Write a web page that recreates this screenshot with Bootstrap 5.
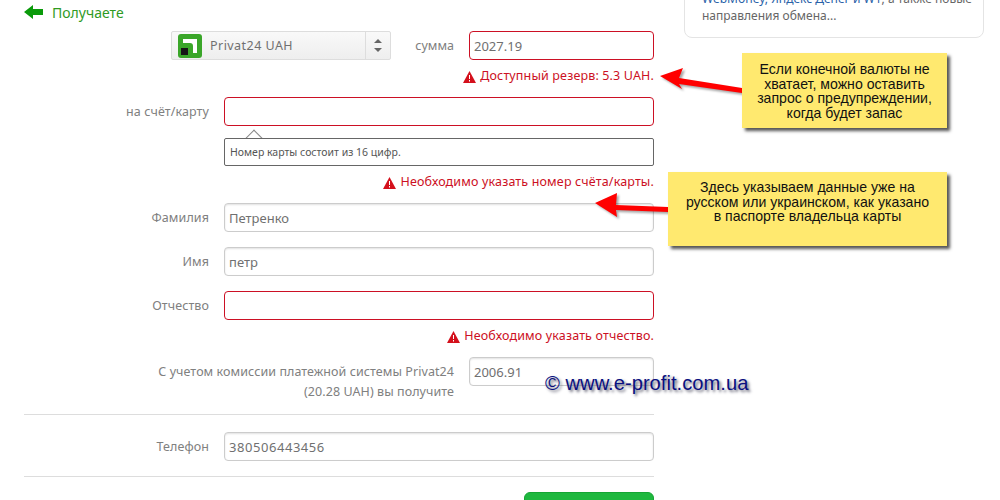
<!DOCTYPE html>
<html lang="ru">
<head>
  <meta charset="UTF-8" />
  <meta name="viewport" content="width=device-width, initial-scale=1.0"/>
  <title>Получаете</title>
  <link href="https://cdn.jsdelivr.net/npm/bootstrap@5.3.0/dist/css/bootstrap.min.css" rel="stylesheet"/>
  <style>
    html, body { height: 500px; overflow: hidden; }
    body { font-family: "Noto Sans", "Open Sans", sans-serif; font-size: 13px; color: #666; background: #fff; position: relative; }
    .page-wrap { padding-left: 24px; gap: 30px; height: 500px; overflow: hidden; }
    .main-col { width: 630px; flex: none; }
    .side-col { width: 300px; flex: none; }

    .heading-line { height: 31px; color: #2f9a1f; font-size: 14px; padding-top: 3px; line-height: 20px; }
    .heading-line svg { margin-top: 2px; }
    .form-line { height: 29px; }
    .line-label { width: 200px; flex: none; padding-right: 15px; text-align: right; color: #808080; font-size: 12.5px; line-height: 29px; letter-spacing: .1px; }
    .field { height: 29px; border: 1px solid #ccc; border-radius: 4px; box-shadow: inset 0 1px 2px rgba(0,0,0,.12); padding: 0 4px; color: #707070; font-size: 13px; line-height: 28px; background: #fff; min-width: 0; }
    .field.bad { border-color: #cc1024; box-shadow: none; }
    .field.wide { width: 430px; }
    .field.narrow { width: 185px; }
    .field.phone { letter-spacing: .55px; }

    .pay-select { width: 220px; height: 29px; margin-left: 147px; border: 1px solid #ddd; border-radius: 2px; background: linear-gradient(#f9f9f9, #eee); }
    .pay-select svg { margin-left: 6px; }
    .pay-name { padding: 2px 0 0 8px; font-size: 12.5px; color: #707070; letter-spacing: .45px; }
    .pay-arrows { width: 25px; border-left: 1px solid #ddd; gap: 5px; }
    .arrow-up { border: 4px solid transparent; border-top: 0; border-bottom: 4px solid #666; }
    .arrow-down { border: 4px solid transparent; border-bottom: 0; border-top: 4px solid #666; }
    .sum-label { width: 78px; padding-right: 15px; text-align: right; font-size: 12.5px; color: #808080; line-height: 29px; }

    .err-line { height: 37px; padding-top: 7px; color: #cc1024; font-size: 12.5px; gap: 4px; line-height: 17px; letter-spacing: .15px; }

    .hint-wrap { width: 430px; margin-left: 200px; margin-top: 12px; position: relative; }
    .hint-box { height: 28px; border: 1px solid #666; border-radius: 2px; padding: 0 5px; font-size: 10.5px; line-height: 27px; color: #555; background: #fff; }
    .hint-tip { position: absolute; left: 24px; top: -6px; width: 12px; height: 12px; background: #fff; border-left: 1px solid #888; border-top: 1px solid #888; transform: rotate(45deg); }

    .gap-after { margin-bottom: 15px; }
    .commission-label { width: 445px; flex: none; text-align: right; padding-right: 15px; font-size: 12.5px; line-height: 20px; color: #808080; padding-top: 5px; letter-spacing: .07px; }
    .rule-first { border-top: 1px solid #ddd; margin: 12px 0 17px; }
    .rule-second { border-top: 1px solid #ddd; margin: 15px 0; }
    .go-btn { width: 130px; height: 40px; background: #1fb83f; border: 1px solid #16a534; border-radius: 6px; }

    .side-note { margin-top: -30px; height: 68px; border: 1px solid #e4e4e4; border-radius: 8px; padding: 19px 17px 0; font-size: 12px; line-height: 17px; color: #666; background: #fff; white-space: nowrap; overflow: hidden; }
    .side-note a { color: #2a62a8; text-decoration: none; }

    .sticker { position: absolute; background: #ffe96f; box-shadow: 3px 3px 3px #555; color: #111; font-family: "Liberation Sans", sans-serif; font-size: 14.1px; line-height: 14.5px; text-align: center; }
    .sticker-a { left: 742px; top: 53px; width: 205px; height: 75px; padding-top: 9px; }
    .sticker-b { left: 668px; top: 172px; width: 279px; height: 74px; padding-top: 8px; }
    .pointer { position: absolute; overflow: visible; filter: drop-shadow(2px 2px 1px rgba(0,0,0,.35)); }
    .pointer-a { left: 655px; top: 62px; }
    .pointer-b { left: 590px; top: 190px; }
    .watermark { position: absolute; left: 545px; top: 371px; font-family: "Liberation Sans", sans-serif; font-size: 20.2px; line-height: 24px; color: #0a1080; text-shadow: 2px 2px 3px #667; white-space: nowrap; }
  </style>
</head>
<body>
  <div class="d-flex page-wrap">
    <div class="main-col">
      <div class="heading-line d-flex align-items-start gap-2">
        <svg width="20" height="16" viewBox="0 0 20 16" class="flex-shrink-0"><path d="M0 7 9 0v4h10v6H9v4z" fill="#0a9a0a"/></svg>
        <span>Получаете</span>
      </div>

      <div class="d-flex form-line">
        <div class="pay-select d-flex align-items-center">
          <svg width="24" height="24" viewBox="0 0 24 24" class="flex-shrink-0">
            <rect width="24" height="24" rx="3" fill="#3aa629"/>
            <path d="M5 5h14v14h-4v-7a3 3 0 0 0-3-3H5z" fill="#fff"/>
            <rect x="3" y="14" width="7" height="7" fill="#151515"/>
          </svg>
          <span class="pay-name flex-grow-1">Privat24 UAH</span>
          <span class="pay-arrows d-flex flex-column align-items-center justify-content-center align-self-stretch">
            <i class="arrow-up"></i><i class="arrow-down"></i>
          </span>
        </div>
        <div class="sum-label">сумма</div>
        <div class="field bad narrow">2027.19</div>
      </div>
      <div class="err-line d-flex justify-content-end align-items-start">
        <svg width="13" height="12" viewBox="0 0 13 12" class="mt-1"><path d="M6.500 0 13 12H0z" fill="#d4101c"/><path d="M6 4h1v4H6zM6 9h1v1.500H6z" fill="#fff"/></svg>
        <span>Доступный резерв: 5.3 UAH.</span>
      </div>

      <div class="d-flex form-line">
        <div class="line-label">на счёт/карту</div>
        <div class="field bad wide"></div>
      </div>
      <div class="hint-wrap">
        <div class="hint-tip"></div>
        <div class="hint-box position-relative">Номер карты состоит из 16 цифр.</div>
      </div>
      <div class="err-line d-flex justify-content-end align-items-start">
        <svg width="13" height="12" viewBox="0 0 13 12" class="mt-1"><path d="M6.500 0 13 12H0z" fill="#d4101c"/><path d="M6 4h1v4H6zM6 9h1v1.500H6z" fill="#fff"/></svg>
        <span>Необходимо указать номер счёта/карты.</span>
      </div>

      <div class="d-flex form-line gap-after">
        <div class="line-label">Фамилия</div>
        <div class="field wide">Петренко</div>
      </div>
      <div class="d-flex form-line gap-after">
        <div class="line-label">Имя</div>
        <div class="field wide">петр</div>
      </div>
      <div class="d-flex form-line">
        <div class="line-label">Отчество</div>
        <div class="field bad wide"></div>
      </div>
      <div class="err-line d-flex justify-content-end align-items-start">
        <svg width="13" height="12" viewBox="0 0 13 12" class="mt-1"><path d="M6.500 0 13 12H0z" fill="#d4101c"/><path d="M6 4h1v4H6zM6 9h1v1.500H6z" fill="#fff"/></svg>
        <span>Необходимо указать отчество.</span>
      </div>

      <div class="d-flex">
        <div class="commission-label">С учетом комиссии платежной системы Privat24<br>(20.28 UAH) вы получите</div>
        <div class="field narrow">2006.91</div>
      </div>
      <div class="rule-first"></div>
      <div class="d-flex form-line">
        <div class="line-label">Телефон</div>
        <div class="field wide phone">380506443456</div>
      </div>
      <div class="rule-second"></div>
      <div class="d-flex justify-content-end"><div class="go-btn"></div></div>
    </div>

    <div class="side-col">
      <div class="side-note"><a href="#">WebMoney, Яндекс Денег и W1</a>, а также новые<br>направления обмена...</div>
    </div>
  </div>

  <!-- пометки поверх скриншота -->
  <svg class="pointer pointer-a" width="95" height="40" viewBox="0 0 95 40">
    <path d="M5 14 28 6 24 16 87 26 87 31 24 22 27 27z" fill="#f00"/>
  </svg>
  <svg class="pointer pointer-b" width="85" height="30" viewBox="0 0 85 30">
    <path d="M5 13 27 3 26 15 78 17 78 22 26 20 27 27z" fill="#f00"/>
  </svg>
  <div class="sticker sticker-a">Если конечной валюты не<br>хватает, можно оставить<br>запрос о предупреждении,<br>когда будет запас</div>
  <div class="sticker sticker-b">Здесь указываем данные уже на<br>русском или украинском, как указано<br>в паспорте владельца карты</div>
  <div class="watermark">© www.e-profit.com.ua</div>

  <script src="https://cdn.jsdelivr.net/npm/bootstrap@5.3.0/dist/js/bootstrap.bundle.min.js"></script>
</body>
</html>
